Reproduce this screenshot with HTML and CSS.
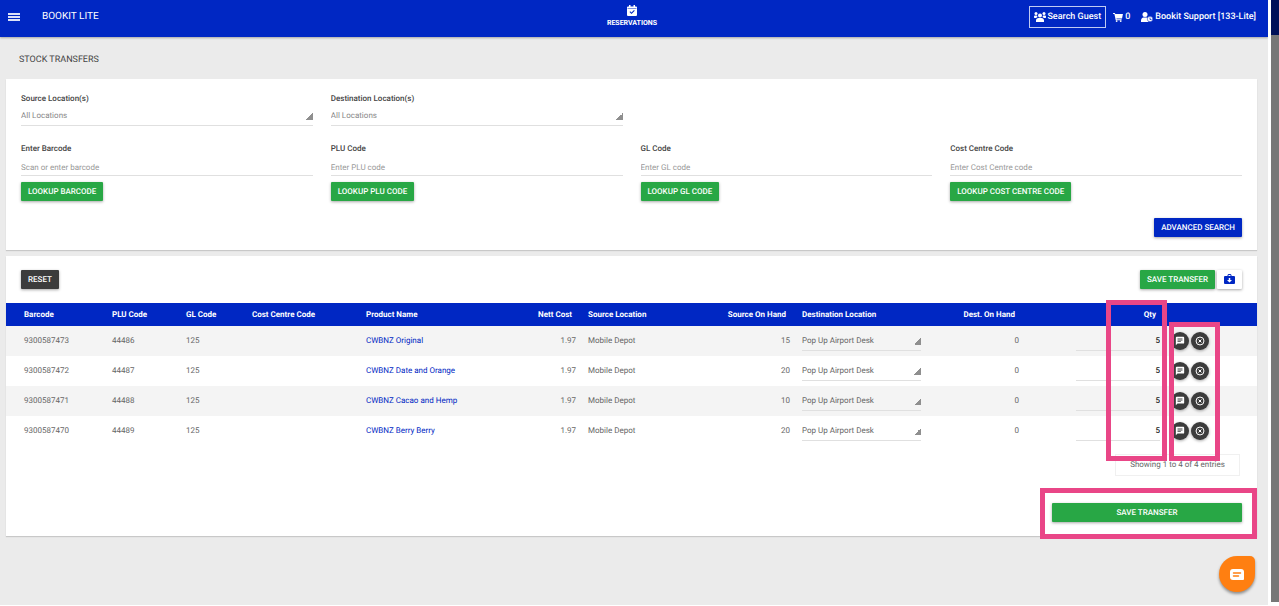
FILE: index.html
```
<!DOCTYPE html>
<html lang="en">
<head>
    <meta charset="UTF-8">
    <meta name="viewport" content="width=device-width, initial-scale=1.0">
    <title>Stock Transfers</title>
    <link rel="stylesheet" href="styles.css">
</head>
<body>

<!-- shared icons -->
<svg class="sprite" aria-hidden="true">
    <symbol id="icon-comment" viewBox="0 0 24 24">
        <path fill="currentColor" fill-rule="evenodd" d="M4 2h16a2 2 0 0 1 2 2v12a2 2 0 0 1-2 2H6l-4 4V4a2 2 0 0 1 2-2zM6 6v2h12V6zM6 9v2h12V9zM6 12v2h8v-2z"/>
    </symbol>
    <symbol id="icon-remove" viewBox="0 0 24 24">
        <circle cx="12" cy="12" r="9.500" fill="none" stroke="currentColor" stroke-width="2.400"/>
        <path d="M8.500 8.500l7 7M15.500 8.500l-7 7" stroke="currentColor" stroke-width="2.400"/>
    </symbol>
</svg>

<div class="app">
    <header class="topbar">
        <div class="topbar-left">
            <button class="menu-btn" aria-label="Menu"><span></span><span></span><span></span></button>
            <a href="#" class="brand">BOOKIT LITE</a>
        </div>
        <a href="#" class="nav-item">
            <svg width="10" height="11" viewBox="0 0 20 22">
                <path fill="#fff" fill-rule="evenodd" d="M4 0h3v3h6V0h3v3h2a2 2 0 0 1 2 2v15a2 2 0 0 1-2 2H2a2 2 0 0 1-2-2V5a2 2 0 0 1 2-2h2zM1 7v1h18V7zM14 10l-5 5-2.500-2.500L5 14l4 4 6.500-6.500z"/>
            </svg>
            RESERVATIONS
        </a>
        <div class="topbar-right">
            <button class="guest-btn">
                <svg width="12" height="10" viewBox="0 0 24 20" fill="#fff">
                    <circle cx="4" cy="3" r="3"/>
                    <circle cx="20" cy="3" r="3"/>
                    <circle cx="12" cy="7" r="4"/>
                    <path d="M0 11V9a2 2 0 0 1 2-2h4l1 3-3 2H1zM24 11V9a2 2 0 0 0-2-2h-4l-1 3 3 2h3zM4 20v-3c0-3 2-5 5-5h6c3 0 5 2 5 5v3z"/>
                </svg>
                Search Guest
            </button>
            <a href="#" class="top-link cart">
                <svg width="10" height="9" viewBox="0 0 22 20" fill="#fff">
                    <path d="M0 0h4l1 2h17l-2 10H7.500l.5 2h11v2H6L3 2H0z"/>
                    <circle cx="8" cy="18" r="2"/>
                    <circle cx="17" cy="18" r="2"/>
                </svg>
                0
            </a>
            <a href="#" class="top-link user">
                <svg width="12" height="10" viewBox="0 0 24 20">
                    <circle cx="8" cy="5" r="5" fill="#fff"/>
                    <path fill="#fff" d="M0 20v-3c0-3 2-6 5-6h6l4 2v7z"/>
                    <circle cx="18" cy="14" r="5.500" fill="#fff" stroke="#0027c3"/>
                    <path d="M18 11v4h3" fill="none" stroke="#0027c3" stroke-width="1.500"/>
                </svg>
                Bookit Support [133-Lite]
            </a>
        </div>
    </header>

    <main>
        <h1>STOCK TRANSFERS</h1>

        <form class="panel filters">
            <div class="filter-grid">
                <div class="field">
                    <label for="source">Source Location(s)</label>
                    <select id="source"><option>All Locations</option></select>
                </div>
                <div class="field">
                    <label for="destination">Destination Location(s)</label>
                    <select id="destination"><option>All Locations</option></select>
                </div>
            </div>
            <div class="filter-grid">
                <div class="field">
                    <label for="barcode">Enter Barcode</label>
                    <input type="text" id="barcode" placeholder="Scan or enter barcode">
                    <button type="button" class="btn green">LOOKUP BARCODE</button>
                </div>
                <div class="field">
                    <label for="plu">PLU Code</label>
                    <input type="text" id="plu" placeholder="Enter PLU code">
                    <button type="button" class="btn green">LOOKUP PLU CODE</button>
                </div>
                <div class="field">
                    <label for="gl">GL Code</label>
                    <input type="text" id="gl" placeholder="Enter GL code">
                    <button type="button" class="btn green">LOOKUP GL CODE</button>
                </div>
                <div class="field">
                    <label for="cost">Cost Centre Code</label>
                    <input type="text" id="cost" placeholder="Enter Cost Centre code">
                    <button type="button" class="btn green">LOOKUP COST CENTRE CODE</button>
                </div>
            </div>
            <div class="filter-actions">
                <button type="button" class="btn blue">ADVANCED SEARCH</button>
            </div>
        </form>

        <section class="panel transfers">
            <div class="toolbar">
                <button class="btn dark">RESET</button>
                <div class="toolbar-right">
                    <button class="btn green">SAVE TRANSFER</button>
                    <button class="btn white" aria-label="Import">
                        <svg width="11" height="11" viewBox="0 0 22 22">
                            <path fill="#0027c3" fill-rule="evenodd" d="M7 4V2l2-2h4l2 2v2h5a2 2 0 0 1 2 2v12a2 2 0 0 1-2 2H2a2 2 0 0 1-2-2V6a2 2 0 0 1 2-2zM9 4h4V2H9zM9.500 8v4H6l5 5 5-5h-3.500V8z"/>
                        </svg>
                    </button>
                </div>
            </div>

            <table>
                <colgroup>
                    <col class="col-barcode">
                    <col class="col-plu">
                    <col class="col-gl">
                    <col class="col-cost">
                    <col>
                    <col class="col-nett">
                    <col class="col-source">
                    <col class="col-onhand">
                    <col class="col-dest">
                    <col class="col-desthand">
                    <col class="col-qty">
                    <col class="col-actions">
                </colgroup>
                <thead>
                    <tr>
                        <th>Barcode</th>
                        <th>PLU Code</th>
                        <th>GL Code</th>
                        <th>Cost Centre Code</th>
                        <th>Product Name</th>
                        <th class="num">Nett Cost</th>
                        <th>Source Location</th>
                        <th class="num">Source On Hand</th>
                        <th>Destination Location</th>
                        <th class="num">Dest. On Hand</th>
                        <th class="num">Qty</th>
                        <th></th>
                    </tr>
                </thead>
                <tbody>
                    <tr>
                        <td>9300587473</td>
                        <td>44486</td>
                        <td>125</td>
                        <td></td>
                        <td><a href="#">CWBNZ Original</a></td>
                        <td class="num">1.97</td>
                        <td>Mobile Depot</td>
                        <td class="num">15</td>
                        <td><select aria-label="Destination location"><option>Pop Up Airport Desk</option></select></td>
                        <td class="num">0</td>
                        <td class="num"><input type="text" class="qty" aria-label="Quantity" value="5"></td>
                        <td><div class="row-actions">
                            <button class="round" aria-label="Comment"><svg><use href="#icon-comment"/></svg></button>
                            <button class="round" aria-label="Remove"><svg><use href="#icon-remove"/></svg></button>
                        </div></td>
                    </tr>
                    <tr>
                        <td>9300587472</td>
                        <td>44487</td>
                        <td>125</td>
                        <td></td>
                        <td><a href="#">CWBNZ Date and Orange</a></td>
                        <td class="num">1.97</td>
                        <td>Mobile Depot</td>
                        <td class="num">20</td>
                        <td><select aria-label="Destination location"><option>Pop Up Airport Desk</option></select></td>
                        <td class="num">0</td>
                        <td class="num"><input type="text" class="qty" aria-label="Quantity" value="5"></td>
                        <td><div class="row-actions">
                            <button class="round" aria-label="Comment"><svg><use href="#icon-comment"/></svg></button>
                            <button class="round" aria-label="Remove"><svg><use href="#icon-remove"/></svg></button>
                        </div></td>
                    </tr>
                    <tr>
                        <td>9300587471</td>
                        <td>44488</td>
                        <td>125</td>
                        <td></td>
                        <td><a href="#">CWBNZ Cacao and Hemp</a></td>
                        <td class="num">1.97</td>
                        <td>Mobile Depot</td>
                        <td class="num">10</td>
                        <td><select aria-label="Destination location"><option>Pop Up Airport Desk</option></select></td>
                        <td class="num">0</td>
                        <td class="num"><input type="text" class="qty" aria-label="Quantity" value="5"></td>
                        <td><div class="row-actions">
                            <button class="round" aria-label="Comment"><svg><use href="#icon-comment"/></svg></button>
                            <button class="round" aria-label="Remove"><svg><use href="#icon-remove"/></svg></button>
                        </div></td>
                    </tr>
                    <tr>
                        <td>9300587470</td>
                        <td>44489</td>
                        <td>125</td>
                        <td></td>
                        <td><a href="#">CWBNZ Berry Berry</a></td>
                        <td class="num">1.97</td>
                        <td>Mobile Depot</td>
                        <td class="num">20</td>
                        <td><select aria-label="Destination location"><option>Pop Up Airport Desk</option></select></td>
                        <td class="num">0</td>
                        <td class="num"><input type="text" class="qty" aria-label="Quantity" value="5"></td>
                        <td><div class="row-actions">
                            <button class="round" aria-label="Comment"><svg><use href="#icon-comment"/></svg></button>
                            <button class="round" aria-label="Remove"><svg><use href="#icon-remove"/></svg></button>
                        </div></td>
                    </tr>
                </tbody>
            </table>

            <div class="table-footer">
                <div class="entries">Showing 1 to 4 of 4 entries</div>
                <button class="btn green save-wide">SAVE TRANSFER</button>
            </div>

            <div class="highlight highlight-qty"></div>
            <div class="highlight highlight-actions"></div>
            <div class="highlight highlight-save"></div>
        </section>
    </main>
</div>

<div class="scroll-edge"></div>
<div class="backdrop"></div>

<button class="chat" aria-label="Chat">
    <svg width="14" height="11" viewBox="0 0 28 22">
        <path fill="#fff" d="M6 0h16a6 6 0 0 1 6 6v14a2 2 0 0 1-2 2H6a6 6 0 0 1-6-6V6a6 6 0 0 1 6-6z"/>
        <path d="M7 8h14M7 14h10" stroke="#ff7f11" stroke-width="3" stroke-linecap="round"/>
    </svg>
</button>

</body>
</html>
```
FILE: styles.css
```
* {
    box-sizing: border-box;
}

body {
    display: flex;
    min-height: 100vh;
    margin: 0;
    background: #fff;
    color: #666;
    font-family: Roboto, Arial, sans-serif;
    font-size: 8px;
    line-height: 12px;
    text-rendering: geometricPrecision;
}

button, input, select {
    margin: 0;
    font: inherit;
    text-rendering: inherit;
}

button {
    border: 0;
    cursor: pointer;
}

a {
    color: #0027c3;
    text-decoration: none;
}

.sprite {
    position: absolute;
    width: 0;
    height: 0;
}

.app {
    flex: 1;
    min-width: 0;
    margin-bottom: 1px;
    background: #ebebeb;
}

/* top bar */
.topbar {
    display: grid;
    grid-template-columns: 1fr auto 1fr;
    align-items: center;
    height: 37px;
    padding: 0 12px 3px 8px;
    background: #0027c3;
    color: #fff;
    box-shadow: 0 1px 2px rgba(0, 0, 0, 0.3);
}

.topbar a {
    color: #fff;
}

.topbar-left, .topbar-right {
    display: flex;
    align-items: center;
}

.topbar-left {
    gap: 22px;
    font-size: 10px;
}

.topbar-right {
    justify-content: flex-end;
    font-size: 9px;
    font-weight: 500;
}

.menu-btn {
    display: flex;
    flex-direction: column;
    gap: 1px;
    width: 12px;
    padding: 0;
    background: none;
}

.menu-btn span {
    height: 2px;
    background: #dde2f8;
}

.nav-item {
    display: flex;
    flex-direction: column;
    align-items: center;
    gap: 1px;
    font-size: 7px;
    font-weight: 700;
}

.guest-btn {
    display: flex;
    align-items: center;
    gap: 1px;
    height: 22px;
    padding: 0 4px;
    border: 1px solid #c0caf2;
    background: none;
    color: #fff;
}

.top-link {
    display: flex;
    align-items: center;
    gap: 2px;
}

.cart {
    margin-left: 7px;
}

.user {
    margin-left: 11px;
}

/* page */
main {
    padding: 0 11px 0 6px;
}

h1 {
    margin: 0;
    padding: 17px 13px 13px;
    color: #444;
    font-size: 9px;
    font-weight: 400;
    line-height: 12px;
}

.panel {
    background: #fff;
    box-shadow: 0 1px 1px rgba(0, 0, 0, 0.15);
}

.filters {
    padding: 14px 15px 13px;
    margin-bottom: 6px;
}

.filter-grid {
    display: grid;
    grid-template-columns: repeat(4, 1fr);
    gap: 18px;
    margin-bottom: 17px;
}

.field {
    display: flex;
    flex-direction: column;
    align-items: flex-start;
}

.field label {
    color: #444;
    font-weight: 500;
}

select, input {
    width: 100%;
    height: 21px;
    padding: 0;
    border: 0;
    border-bottom: 1px solid #e0e0e0;
    border-radius: 0;
    outline: 0;
    background: transparent;
    color: #666;
}

select {
    appearance: none;
    background: linear-gradient(135deg, transparent 50%, #8f8f8f 50%) right 8px / 7px 7px no-repeat;
}

.field select {
    padding-top: 2px;
    color: #888;
}

.field input {
    padding-top: 4px;
}

input::placeholder {
    color: #999;
    opacity: 1;
}

.btn {
    height: 19px;
    padding: 0 7px;
    border-radius: 1px;
    color: #fff;
    font-weight: 500;
    box-shadow: 0 1px 3px rgba(0, 0, 0, 0.35);
}

.field .btn {
    margin-top: 6px;
}

.green {
    background: #28a745;
}

.blue {
    background: #0027c3;
}

.dark {
    background: #3c3c3c;
}

.white {
    display: flex;
    align-items: center;
    background: #fff;
}

.filter-actions {
    display: flex;
    justify-content: flex-end;
}

/* transfer list */
.transfers {
    position: relative;
}

.toolbar {
    display: flex;
    justify-content: space-between;
    padding: 14px 15px;
}

.toolbar-right {
    display: flex;
    gap: 2px;
}

table {
    width: 100%;
    border-collapse: collapse;
    table-layout: fixed;
}

.col-barcode { width: 100px; }
.col-plu { width: 74px; }
.col-gl { width: 66px; }
.col-cost { width: 114px; }
.col-nett { width: 82px; }
.col-source { width: 108px; }
.col-onhand { width: 106px; }
.col-dest { width: 131px; }
.col-desthand { width: 98px; }
.col-qty { width: 141px; }
.col-actions { width: 91px; }

th, td {
    padding: 0 6px;
    text-align: left;
    white-space: nowrap;
}

th:first-child, td:first-child {
    padding-left: 18px;
}

td:last-child {
    padding-left: 5px;
}

th {
    height: 23px;
    background: #0027c3;
    color: #fff;
    font-weight: 700;
}

td {
    height: 30px;
}

tbody tr:nth-child(odd) {
    background: #f4f4f4;
}

td.num {
    text-align: right;
}

th.num {
    padding-right: 10px;
    text-align: right;
}

td select {
    display: block;
    width: 119px;
    height: 19px;
    background-position: right 6px;
}

input.qty {
    display: block;
    width: 84px;
    height: 19px;
    margin-left: auto;
    color: #222;
    font-weight: 500;
    text-align: right;
}

.row-actions {
    display: flex;
    gap: 2px;
}

.round {
    display: flex;
    align-items: center;
    justify-content: center;
    width: 18px;
    height: 18px;
    padding: 0;
    border-radius: 50%;
    background: #3c3c3c;
    color: #fff;
    box-shadow: 0 1px 3px rgba(0, 0, 0, 0.35);
}

.round svg {
    width: 10px;
    height: 10px;
}

.table-footer {
    display: flex;
    flex-direction: column;
    align-items: flex-end;
    gap: 27px;
    padding: 8px 15px 14px;
}

.entries {
    width: 125px;
    margin-right: 2px;
    padding: 4px 0;
    border: 1px solid #f0f0f0;
    text-align: center;
}

.save-wide {
    width: 190px;
}

/* call-out frames over the list */
.highlight {
    position: absolute;
    border: 5px solid #e94687;
    pointer-events: none;
}

.highlight-qty {
    top: 44px;
    right: 90px;
    width: 61px;
    height: 161px;
}

.highlight-actions {
    top: 66px;
    right: 37px;
    width: 51px;
    height: 139px;
}

.highlight-save {
    right: 0;
    bottom: -3px;
    width: 217px;
    height: 51px;
}

/* right edge of the window */
.scroll-edge {
    width: 3px;
    background: #fff;
}

.backdrop {
    width: 8px;
    margin-bottom: 4px;
    background: linear-gradient(#001058 35px, #777 35px);
}

.chat {
    position: fixed;
    right: 24px;
    bottom: 14px;
    display: flex;
    align-items: center;
    justify-content: center;
    width: 36px;
    height: 36px;
    padding: 0;
    border-radius: 50% 5px 50% 50%;
    background: #ff7f11;
    box-shadow: 0 2px 3px rgba(0, 0, 0, 0.4);
}
```
